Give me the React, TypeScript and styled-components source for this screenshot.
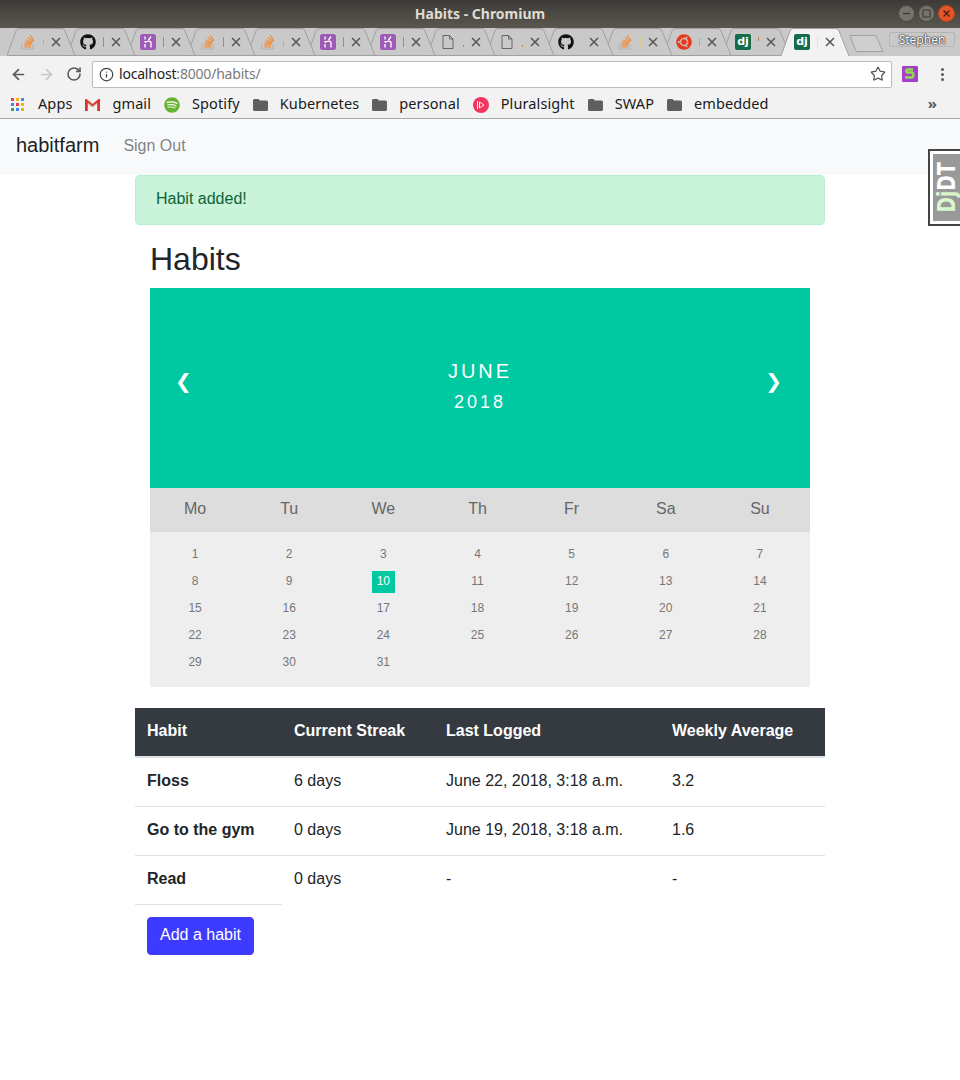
import styled, { createGlobalStyle } from "styled-components"
import { ArrowLeft, ArrowRight, Info, RotateCw, Star } from "lucide-react"
import { FaGithub, FaSpotify, FaUbuntu } from "react-icons/fa"

const GlobalStyle = createGlobalStyle`
  html, body {
    margin: 0;
    padding: 0;
    background: #fff;
  }
  body {
    font-family: "Liberation Sans", Arial, sans-serif;
    font-size: 16px;
    line-height: 24px;
    color: #212529;
  }
  * {
    box-sizing: border-box;
  }
`

const Page = styled.div`
  position: relative;
  width: 960px;
  height: 1080px;
  overflow: hidden;
`

const TitleBar = styled.div`
  display: flex;
  align-items: center;
  justify-content: center;
  position: relative;
  height: 28px;
  background: linear-gradient(#3d3b37, #5a574f);
  color: #dfdbd2;
  font-family: "Noto Sans", sans-serif;
  font-size: 14px;
  font-weight: 700;
`

const WindowButtons = styled.div`
  position: absolute;
  top: 5px;
  right: 5px;
  display: flex;
  gap: 3px;
`

const WindowButton = styled.div<{ $close?: boolean }>`
  display: flex;
  align-items: center;
  justify-content: center;
  width: 17px;
  height: 17px;
  border-radius: 50%;
  background: ${(p) => (p.$close ? "#e2562a" : "#75736c")};
  border: 1px solid ${(p) => (p.$close ? "#b8431f" : "#4a4843")};
`

const TabStrip = styled.div`
  position: relative;
  display: flex;
  height: 28px;
  padding-left: 7px;
  background: #c9c9c9;
`

const TabItem = styled.div<{ $narrow?: boolean; $layer: number }>`
  position: relative;
  z-index: ${(p) => p.$layer};
  display: flex;
  align-items: center;
  flex: none;
  width: ${(p) => (p.$narrow ? 59 : 60)}px;
  height: 28px;
  padding-left: 13px;
`

const TabShape = styled.svg`
  position: absolute;
  left: 0;
  top: 0;
  width: 70px;
  height: 28px;
`

const TabIcon = styled.span`
  position: relative;
  display: flex;
  align-items: center;
  justify-content: center;
  flex: none;
  width: 16px;
  height: 16px;
`

const TabTick = styled.span<{ $color: string; $height: number; $shift: number }>`
  position: relative;
  top: ${(p) => p.$shift}px;
  flex: none;
  width: 1px;
  height: ${(p) => p.$height}px;
  margin-left: 7px;
  background: ${(p) => p.$color};
`

const TabClose = styled.svg`
  position: absolute;
  left: 44px;
  top: 9px;
  width: 10px;
  height: 10px;
`

const DjangoBadge = styled.span`
  display: flex;
  align-items: center;
  justify-content: center;
  width: 16px;
  height: 16px;
  border-radius: 2px;
  background: #146c4a;
  color: #fff;
  font-family: "DejaVu Sans", sans-serif;
  font-size: 11px;
  font-weight: 700;
  line-height: 16px;
`

const NewTab = styled.svg`
  position: absolute;
  left: 849px;
  top: 6px;
  width: 36px;
  height: 19px;
`

const ProfileButton = styled.div`
  position: absolute;
  left: 889px;
  top: 4px;
  width: 66px;
  height: 15px;
  border: 1px solid #b5b5b5;
  border-radius: 2px;
  background: #c9c9c9;
  color: #fff;
  font-family: "Noto Sans", sans-serif;
  font-size: 12px;
  line-height: 13px;
  text-align: center;
  text-shadow: 0 0 1px #222, 0 0 1px #222, 0 0 2px #222;
`

const Toolbar = styled.div`
  display: flex;
  align-items: center;
  height: 36px;
  padding: 0 10px;
  background: #f2f2f2;
  color: #5a5a5a;
`

const NavIcon = styled.span<{ $muted?: boolean }>`
  display: flex;
  flex: none;
  width: 28px;
  color: ${(p) => (p.$muted ? "#c8c8c8" : "#5a5a5a")};
`

const AddressBar = styled.div`
  display: flex;
  align-items: center;
  flex: none;
  width: 800px;
  height: 27px;
  margin-left: -2px;
  padding: 0 5px 0 6px;
  border: 1px solid #bcbcbc;
  border-radius: 2px;
  background: #fff;
  font-family: "Noto Sans", sans-serif;
  font-size: 14px;
  letter-spacing: -0.2px;
`

const UrlHost = styled.span`
  margin-left: 5px;
  color: #222;
`

const UrlPath = styled.span`
  flex: 1;
  color: #7b7b7b;
`

const StylusIcon = styled.svg`
  flex: none;
  width: 16px;
  height: 16px;
  margin-left: 10px;
`

const KebabMenu = styled.div`
  display: flex;
  flex-direction: column;
  flex: none;
  gap: 2px;
  margin-left: 23px;

  & > i {
    width: 3px;
    height: 3px;
    border-radius: 50%;
    background: #5a5a5a;
  }
`

const BookmarkBar = styled.div`
  display: flex;
  align-items: center;
  height: 27px;
  padding: 0 0 1px 11px;
  border-bottom: 1px solid #a9a9a9;
  background: #f2f2f2;
  font-family: "Noto Sans", sans-serif;
  font-size: 14.5px;
  letter-spacing: 0.1px;
  color: #1a1a1a;
`

const Bookmark = styled.div`
  display: flex;
  align-items: center;
  flex: none;
  gap: 12px;
  margin-right: 13px;
  line-height: 20px;
`

const BookmarkLabel = styled.span`
  margin-bottom: 4px;
`

const MoreBookmarks = styled.div`
  margin-left: auto;
  margin-right: 23px;
  margin-bottom: 4px;
  color: #5a5a5a;
  font-size: 15px;
  font-weight: 700;
`

const Navbar = styled.nav`
  display: flex;
  align-items: center;
  height: 56px;
  padding: 0 16px 2px;
  background: #f8f9fa;
`

const Brand = styled.a`
  margin-right: 24px;
  padding-bottom: 2px;
  color: rgba(0, 0, 0, 0.9);
  font-size: 20px;
`

const NavLink = styled.a`
  color: rgba(0, 0, 0, 0.5);
`

const Container = styled.main`
  width: 690px;
  margin: 0 auto;
`

const Alert = styled.div`
  height: 50px;
  padding: 11px 20px;
  border: 1px solid #b9edcd;
  border-radius: 4px;
  background: #c9f3da;
  color: #0e6335;
`

const Content = styled.section`
  padding: 0 15px;
`

const Heading = styled.h1`
  margin: 15px 0 10px;
  font-size: 32px;
  font-weight: 500;
  line-height: 38px;
`

const Calendar = styled.div`
  width: 660px;
`

const Month = styled.div`
  display: flex;
  align-items: center;
  justify-content: space-between;
  height: 200px;
  padding: 0 28px 15px 25px;
  background: #00c8a0;
  color: #fff;
`

const MonthArrow = styled.span`
  font-family: "DejaVu Sans", sans-serif;
  font-size: 20px;
  line-height: 24px;
`

const MonthName = styled.div`
  margin: 12px 0 0 3px;
  font-size: 20px;
  line-height: 30px;
  letter-spacing: 3px;
  text-align: center;
`

const MonthYear = styled.span`
  display: block;
  margin-top: 1px;
  font-size: 18px;
`

const Weekdays = styled.ul`
  display: grid;
  grid-template-columns: repeat(7, 1fr);
  height: 44px;
  margin: 0;
  padding: 0 1px 0 0;
  background: #ddd;
  color: #666;
  line-height: 41px;
  list-style: none;
  text-align: center;
`

const Weekday = styled.li`
  padding-right: 4px;
`

const Days = styled.ul`
  display: grid;
  grid-template-columns: repeat(7, 1fr);
  grid-auto-rows: 27px;
  height: 155px;
  margin: 0;
  padding: 8px 1px 0 0;
  background: #eee;
  color: #777;
  font-size: 12px;
  list-style: none;
  text-align: center;
`

const Day = styled.li`
  display: flex;
  align-items: center;
  justify-content: center;
  padding-right: 4px;
`

const ActiveDay = styled.span`
  width: 23px;
  height: 22px;
  margin-top: 3px;
  background: #00c8a0;
  color: #fff;
  line-height: 20px;
`

const HabitTable = styled.table`
  width: 690px;
  margin-top: 21px;
  border-collapse: collapse;
  table-layout: fixed;
`

const HeadCell = styled.th<{ $width: number }>`
  width: ${(p) => p.$width}px;
  height: 49px;
  padding: 11px 12px 13px;
  border-bottom: 2px solid #dee2e6;
  background: #343a40;
  color: #fff;
  text-align: left;
`

const RowHead = styled.th`
  height: 49px;
  padding: 11px 12px 13px;
  border-bottom: 1px solid #dee2e6;
  text-align: left;
`

const Cell = styled.td<{ $last?: boolean }>`
  height: 49px;
  padding: 11px 12px 13px;
  border-bottom: ${(p) => (p.$last ? "none" : "1px solid #dee2e6")};
`

const AddButton = styled.button`
  display: block;
  width: 107px;
  height: 38px;
  margin: 12px 0 0 12px;
  padding-bottom: 3px;
  border: 1px solid #3d3bff;
  border-radius: 4px;
  background: #3d3bff;
  color: #fff;
  font-family: inherit;
  font-size: 16px;
`

const DebugHandle = styled.div`
  position: absolute;
  top: 149px;
  right: 0;
  width: 32px;
  height: 77px;
  padding: 3px 0 3px 3px;
  border: 2px solid #444;
  border-right: 0;
  background: #fff;
`

const DebugLabel = styled.div`
  display: flex;
  align-items: center;
  justify-content: center;
  width: 100%;
  height: 100%;
  padding-right: 2px;
  background: #999;
  color: #fff;
  font-family: "DejaVu Sans", sans-serif;
  font-size: 22px;
  font-weight: 700;
  line-height: 22px;
  transform: rotate(180deg);
  writing-mode: vertical-rl;
`

const DebugText = styled.span`
  display: inline-block;
  transform: scale(1.15, 0.85);
  white-space: nowrap;
`

const DebugAccent = styled.span`
  color: #d9f7cc;
`

const StackIcon = () => (
  <svg width="16" height="16" viewBox="0 0 16 16" fill="none">
    <path d="M2 10v5h11v-5" stroke="#b5b5b5" strokeWidth="1.2" />
    <path
      d="M4 13h7M4.200 10.700l6.800.7M4.800 8.200l6.600 1.700M6 5.800l6 3.100M8 3.400l5 4.400M10.400 1.400l3.600 5.400"
      stroke="#f18a33"
      strokeWidth="1.2"
    />
  </svg>
)

const HerokuIcon = () => (
  <svg width="16" height="16" viewBox="0 0 16 16">
    <rect width="16" height="16" rx="2.500" fill="#9e5bb5" />
    <path d="M5 2.500v3M5 7v1.500M5 10v3.500M11 2.500L8.500 6M5 8.500c2.500-2 6-2 6 .5v4.500" fill="none" stroke="#fff" strokeWidth="1.3" />
  </svg>
)

const FileIcon = () => (
  <svg width="16" height="16" viewBox="0 0 16 16" fill="none">
    <path d="M3 1.500h6.500L13 5v9.500H3zM9.500 1.500V5H13" stroke="#666" strokeWidth="1" />
  </svg>
)

const GmailIcon = () => (
  <svg width="15" height="12" viewBox="0 0 15 12">
    <path d="M0 0h1.500L7.500 5 13.500 0H15v12h-2.800V4.400L7.500 8.200 2.800 4.400V12H0z" fill="#dd3328" />
    <path d="M2.800 3.500 7.500 7.200 12.200 3.500V4.600L7.500 8.400 2.800 4.600z" fill="#c9c9c9" />
  </svg>
)

const FolderIcon = () => (
  <svg width="15" height="12" viewBox="0 0 15 12">
    <path d="M1.500 0h4l1.500 1.500h6.500A1.500 1.500 0 0 1 15 3v7.500a1.500 1.500 0 0 1-1.500 1.500h-12A1.500 1.500 0 0 1 0 10.500v-9A1.500 1.500 0 0 1 1.500 0z" fill="#5f5f5f" />
  </svg>
)

const AppsIcon = () => {
  const colors = ["#e8453c", "#f4b400", "#4285f4", "#4285f4", "#e8453c", "#f4b400", "#34a853", "#4285f4", "#f4b400"]
  return (
    <svg width="15" height="13" viewBox="0 0 15 13">
      {colors.map((color, i) => (
        <rect key={i} x={(i % 3) * 5} y={Math.floor(i / 3) * 5} width="3" height="3" fill={color} />
      ))}
    </svg>
  )
}

const PluralsightIcon = () => (
  <svg width="16" height="16" viewBox="0 0 16 16">
    <circle cx="8" cy="8" r="8" fill="#f0355f" />
    <path d="M6.500 5v6L11 8zM4.500 4v8" fill="none" stroke="#fff" strokeWidth="0.9" />
  </svg>
)

const CloseGlyph = () => (
  <TabClose viewBox="0 0 10 10">
    <path d="M1 1l8 8M9 1L1 9" stroke="#555" strokeWidth="1.5" />
  </TabClose>
)

const tabIcons = {
  stack: <StackIcon />,
  github: <FaGithub size={16} color="#111" />,
  heroku: <HerokuIcon />,
  file: <FileIcon />,
  ubuntu: <FaUbuntu size={16} color="#e9391f" />,
  django: <DjangoBadge>dj</DjangoBadge>,
}

type TabKind = keyof typeof tabIcons

// tick is the sliver of the tab title that still fits beside the close button
const tabs: { kind: TabKind; tick: string; height: number; shift: number }[] = [
  { kind: "stack", tick: "#c9a56a", height: 4, shift: 0 },
  { kind: "github", tick: "#b08a50", height: 10, shift: 0 },
  { kind: "heroku", tick: "#b08a50", height: 10, shift: 0 },
  { kind: "stack", tick: "#b08a50", height: 10, shift: 0 },
  { kind: "stack", tick: "#c9a56a", height: 5, shift: 2 },
  { kind: "heroku", tick: "#b08a50", height: 10, shift: 0 },
  { kind: "heroku", tick: "#b08a50", height: 10, shift: 0 },
  { kind: "file", tick: "#c98a2a", height: 2, shift: 4 },
  { kind: "file", tick: "#c98a2a", height: 2, shift: 4 },
  { kind: "github", tick: "#dcc06a", height: 4, shift: 0 },
  { kind: "stack", tick: "#dcc88a", height: 10, shift: 0 },
  { kind: "ubuntu", tick: "#dca84a", height: 8, shift: 0 },
  { kind: "django", tick: "#b08a50", height: 4, shift: -3 },
  { kind: "django", tick: "#e6e2c8", height: 10, shift: 0 },
]

const bookmarks = [
  { label: "Apps", icon: <AppsIcon /> },
  { label: "gmail", icon: <GmailIcon /> },
  { label: "Spotify", icon: <FaSpotify size={16} color="#65b32e" /> },
  { label: "Kubernetes", icon: <FolderIcon /> },
  { label: "personal", icon: <FolderIcon /> },
  { label: "Pluralsight", icon: <PluralsightIcon /> },
  { label: "SWAP", icon: <FolderIcon /> },
  { label: "embedded", icon: <FolderIcon /> },
]

const weekdays = ["Mo", "Tu", "We", "Th", "Fr", "Sa", "Su"]
const dates = Array.from({ length: 31 }, (_, i) => i + 1)

const habits = [
  { name: "Floss", streak: "6 days", logged: "June 22, 2018, 3:18 a.m.", average: "3.2" },
  { name: "Go to the gym", streak: "0 days", logged: "June 19, 2018, 3:18 a.m.", average: "1.6" },
  { name: "Read", streak: "0 days", logged: "-", average: "-" },
]

const App = () => {
  return (
    <Page>
      <GlobalStyle />
      <TitleBar>
        Habits - Chromium
        <WindowButtons>
          <WindowButton>
            <svg width="9" height="9" viewBox="0 0 9 9">
              <path d="M1 4.500h7" stroke="#3a3935" strokeWidth="1.2" />
            </svg>
          </WindowButton>
          <WindowButton>
            <svg width="9" height="9" viewBox="0 0 9 9">
              <rect x="1" y="1" width="7" height="7" fill="none" stroke="#3a3935" strokeWidth="1" />
            </svg>
          </WindowButton>
          <WindowButton $close>
            <svg width="9" height="9" viewBox="0 0 9 9">
              <path d="M1.500 1.500l6 6M7.500 1.500l-6 6" stroke="#4a1f10" strokeWidth="1.3" />
            </svg>
          </WindowButton>
        </WindowButtons>
      </TitleBar>

      <TabStrip>
        {tabs.map((tab, i) => {
          const active = i === tabs.length - 1
          return (
            <TabItem key={i} $narrow={i >= 7} $layer={active ? 30 : 20 - i}>
              <TabShape viewBox="0 0 70 28">
                <path
                  d={
                    active
                      ? "M0 28L9 3Q10 .5 12 .5H55Q57 .5 58 3L68 28"
                      : "M0 27.500L9 3Q10 .5 12 .5H55Q57 .5 58 3L68 27.500Z"
                  }
                  fill={active ? "#f2f2f2" : "#c9c9c9"}
                  stroke="#a0a0a0"
                  strokeWidth="1"
                />
              </TabShape>
              <TabIcon>{tabIcons[tab.kind]}</TabIcon>
              <TabTick $color={tab.tick} $height={tab.height} $shift={tab.shift} />
              <CloseGlyph />
            </TabItem>
          )
        })}
        <NewTab viewBox="0 0 36 19">
          <path d="M1 1.500H27L34 17.500H7z" fill="#cfcfcf" stroke="#a2a2a2" strokeWidth="1" strokeLinejoin="round" />
        </NewTab>
        <ProfileButton>Stephen</ProfileButton>
      </TabStrip>

      <Toolbar>
        <NavIcon>
          <ArrowLeft size={17} strokeWidth={2.4} />
        </NavIcon>
        <NavIcon $muted>
          <ArrowRight size={17} strokeWidth={2.4} />
        </NavIcon>
        <NavIcon>
          <RotateCw size={16} strokeWidth={2.4} />
        </NavIcon>
        <AddressBar>
          <Info size={15} color="#444" />
          <UrlHost>localhost</UrlHost>
          <UrlPath>:8000/habits/</UrlPath>
          <Star size={16} color="#555" strokeWidth={1.8} />
        </AddressBar>
        <StylusIcon viewBox="0 0 16 16">
          <rect width="16" height="16" rx="1" fill="#a53fc9" />
          <path d="M11 3.500H5.500c-1.500 0-1.500 3 0 3h4.500c2 0 2 5-.5 5H3" fill="none" stroke="#8de04a" strokeWidth="2.400" />
        </StylusIcon>
        <KebabMenu>
          <i />
          <i />
          <i />
        </KebabMenu>
      </Toolbar>

      <BookmarkBar>
        {bookmarks.map((bookmark) => (
          <Bookmark key={bookmark.label}>
            {bookmark.icon}
            <BookmarkLabel>{bookmark.label}</BookmarkLabel>
          </Bookmark>
        ))}
        <MoreBookmarks>»</MoreBookmarks>
      </BookmarkBar>

      <Navbar>
        <Brand>habitfarm</Brand>
        <NavLink>Sign Out</NavLink>
      </Navbar>

      <Container>
        <Alert>Habit added!</Alert>
        <Content>
          <Heading>Habits</Heading>
          <Calendar>
            <Month>
              <MonthArrow>❮</MonthArrow>
              <MonthName>
                JUNE
                <MonthYear>2018</MonthYear>
              </MonthName>
              <MonthArrow>❯</MonthArrow>
            </Month>
            <Weekdays>
              {weekdays.map((day) => (
                <Weekday key={day}>{day}</Weekday>
              ))}
            </Weekdays>
            <Days>
              {dates.map((date) => (
                <Day key={date}>{date === 10 ? <ActiveDay>{date}</ActiveDay> : date}</Day>
              ))}
            </Days>
          </Calendar>
        </Content>

        <HabitTable>
          <thead>
            <tr>
              <HeadCell $width={147}>Habit</HeadCell>
              <HeadCell $width={152}>Current Streak</HeadCell>
              <HeadCell $width={226}>Last Logged</HeadCell>
              <HeadCell $width={165}>Weekly Average</HeadCell>
            </tr>
          </thead>
          <tbody>
            {habits.map((habit, i) => {
              const last = i === habits.length - 1
              return (
                <tr key={habit.name}>
                  <RowHead>{habit.name}</RowHead>
                  <Cell $last={last}>{habit.streak}</Cell>
                  <Cell $last={last}>{habit.logged}</Cell>
                  <Cell $last={last}>{habit.average}</Cell>
                </tr>
              )
            })}
          </tbody>
        </HabitTable>
        <AddButton>Add a habit</AddButton>
      </Container>

      <DebugHandle>
        <DebugLabel>
          <DebugText>
            <DebugAccent>Dj</DebugAccent>DT
          </DebugText>
        </DebugLabel>
      </DebugHandle>
    </Page>
  )
}

export default App
